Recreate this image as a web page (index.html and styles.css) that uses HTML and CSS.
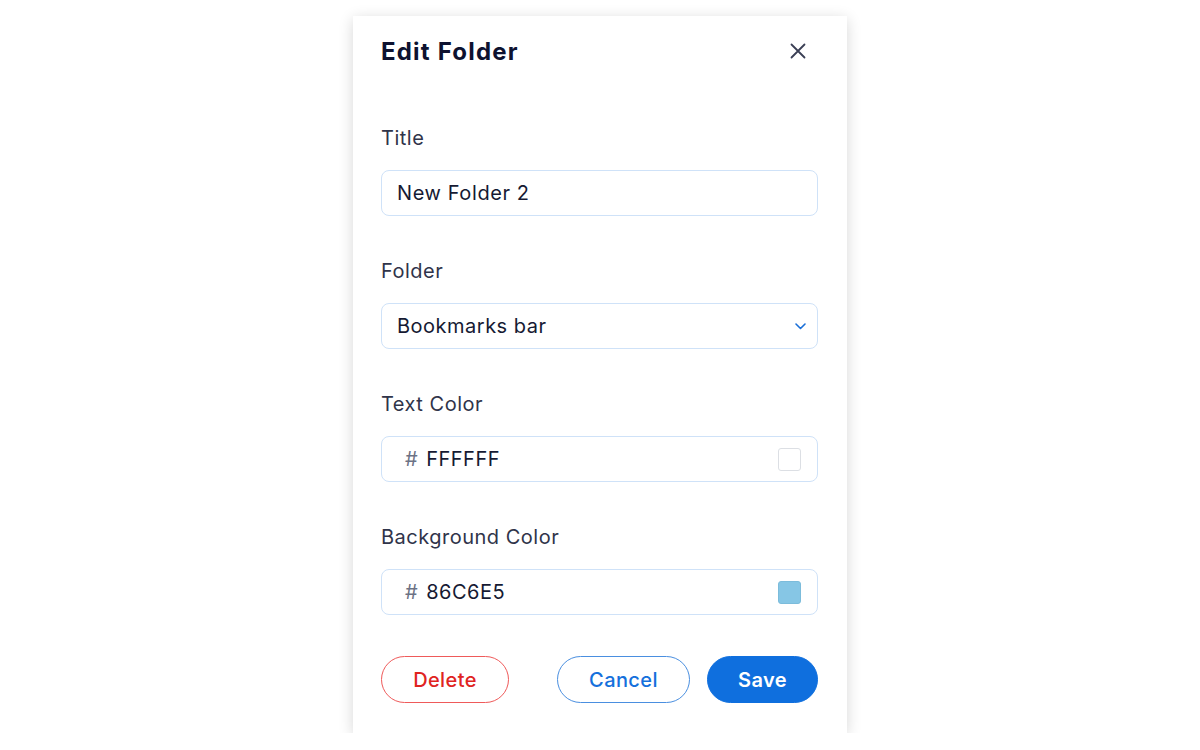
FILE: index.html
```html
<!DOCTYPE html>
<html lang="en">
<head>
    <meta charset="UTF-8">
    <meta name="viewport" content="width=device-width, initial-scale=1.0">
    <title>Edit Folder</title>
    <link rel="stylesheet" href="styles.css">
</head>
<body>

<div class="dialog">
    <div class="dialog-header">
        <h1>Edit Folder</h1>
        <button class="close-btn" aria-label="Close">
            <svg width="16" height="16" viewBox="0 0 16 16">
                <path d="M1.5 1.5 L14.5 14.5 M14.5 1.5 L1.5 14.5" stroke="#3a3f55" stroke-width="1.8" stroke-linecap="round" fill="none"/>
            </svg>
        </button>
    </div>

    <div class="field">
        <label for="title">Title</label>
        <div class="input-box">
            <input type="text" id="title" value="New Folder 2">
        </div>
    </div>

    <div class="field">
        <label for="folder">Folder</label>
        <div class="input-box select-box">
            <span class="value">Bookmarks bar</span>
            <svg class="chevron" width="11" height="7" viewBox="0 0 11 7">
                <path d="M1 1 L5.5 5.5 L10 1" stroke="#1a6fd8" stroke-width="1.6" stroke-linecap="round" stroke-linejoin="round" fill="none"/>
            </svg>
        </div>
    </div>

    <div class="field">
        <label for="text-color">Text Color</label>
        <div class="input-box color-box">
            <span class="hash">#</span>
            <span class="value">FFFFFF</span>
            <span class="swatch white"></span>
        </div>
    </div>

    <div class="field last">
        <label for="bg-color">Background Color</label>
        <div class="input-box color-box">
            <span class="hash">#</span>
            <span class="value">86C6E5</span>
            <span class="swatch blue"></span>
        </div>
    </div>

    <div class="actions">
        <button class="btn btn-delete">Delete</button>
        <div class="right-actions">
            <button class="btn btn-cancel">Cancel</button>
            <button class="btn btn-save">Save</button>
        </div>
    </div>
</div>

</body>
</html>
```

FILE: styles.css
```css
body {
    font-family: Inter, "Noto Sans", sans-serif;
    margin: 0;
    padding: 0;
    background-color: #ffffff;
    display: flex;
    flex-direction: column;
    align-items: center;
}

.dialog {
    width: 494px;
    box-sizing: border-box;
    margin-top: 16px;
    padding: 17px 29px 30px 28px;
    background-color: #ffffff;
    box-shadow: 0 3px 14px rgba(0, 0, 0, 0.16);
}

.dialog-header {
    display: flex;
    justify-content: space-between;
    align-items: center;
    height: 36px;
    margin-bottom: 57px;
}

h1 {
    margin: 0;
    font-size: 24px;
    font-weight: 700;
    color: #0d1230;
    letter-spacing: 1.2px;
}

.close-btn {
    border: none;
    background: none;
    padding: 0;
    margin-right: 12px;
    width: 16px;
    height: 16px;
    cursor: pointer;
}

.field {
    margin-bottom: 43px;
}

.field.last {
    margin-bottom: 0;
}

label {
    display: block;
    height: 24px;
    line-height: 24px;
    margin-bottom: 20px;
    font-size: 20px;
    color: #30344a;
    letter-spacing: 0.5px;
}

.input-box {
    display: flex;
    align-items: center;
    height: 46px;
    box-sizing: border-box;
    border: 1px solid #cfe2f8;
    border-radius: 8px;
    padding: 0 15px;
    font-size: 20px;
    color: #161a33;
    letter-spacing: 0.5px;
}

.input-box input {
    border: none;
    outline: none;
    padding: 0;
    width: 100%;
    font-family: inherit;
    font-size: 20px;
    letter-spacing: 0.6px;
    color: #161a33;
    background: transparent;
}

.select-box {
    justify-content: space-between;
    padding-right: 11px;
}

.color-box {
    padding-left: 23px;
    padding-right: 16px;
}

.hash {
    color: #6c7285;
    margin-right: 8px;
}

.color-box .value {
    flex: 1;
}

.swatch {
    width: 23px;
    height: 23px;
    box-sizing: border-box;
    border-radius: 3px;
}

.swatch.white {
    background-color: #ffffff;
    border: 1px solid #dcdfe4;
}

.swatch.blue {
    background-color: #86c6e5;
    border: 1px solid #7cbcdb;
}

.actions {
    display: flex;
    justify-content: space-between;
    margin-top: 41px;
}

.right-actions {
    display: flex;
    gap: 17px;
}

.btn {
    height: 47px;
    border-radius: 24px;
    font-family: inherit;
    font-size: 20px;
    font-weight: 500;
    letter-spacing: 0.4px;
    background: #ffffff;
    cursor: pointer;
}

.btn-delete {
    width: 128px;
    color: #e0241f;
    border: 1px solid #ef5a5a;
}

.btn-cancel {
    width: 133px;
    color: #1570dc;
    border: 1px solid #4a8fe0;
}

.btn-save {
    width: 111px;
    color: #ffffff;
    font-weight: 600;
    background-color: #0f6fde;
    border: 1px solid #0f6fde;
}
```
